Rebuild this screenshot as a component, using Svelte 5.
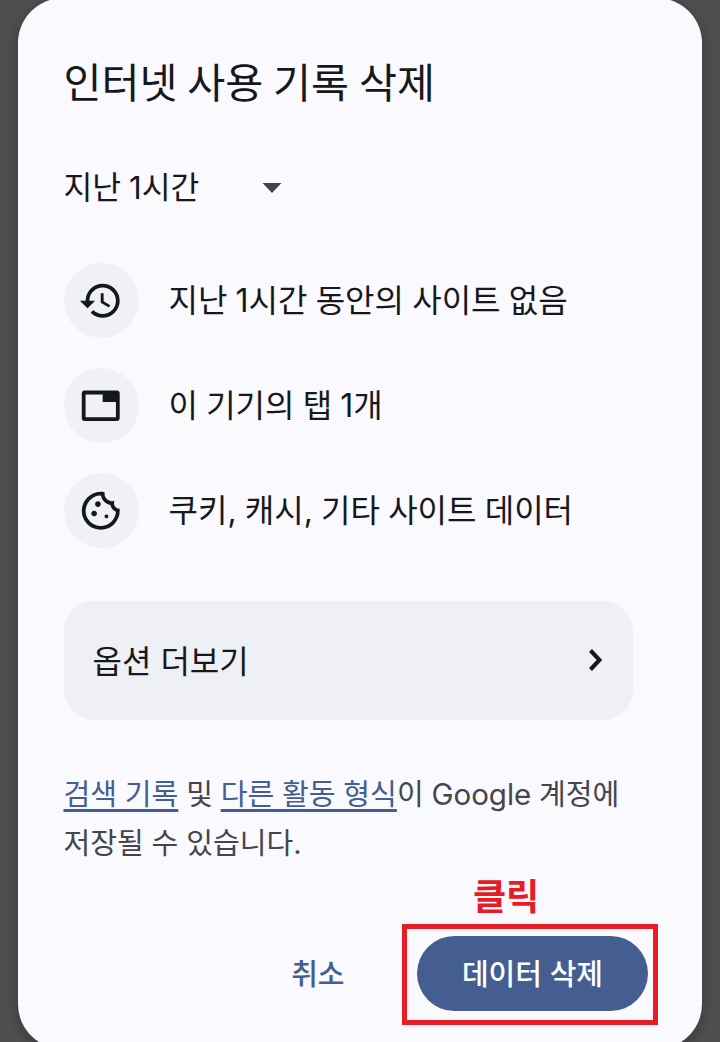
<script lang="ts">
  type IconName = "history" | "tab" | "cookie";

  const items: { icon: IconName; label: string }[] = [
    { icon: "history", label: "지난 1시간 동안의 사이트 없음" },
    { icon: "tab", label: "이 기기의 탭 1개" },
    { icon: "cookie", label: "쿠키, 캐시, 기타 사이트 데이터" },
  ];
</script>

<div class="scrim">
  <div class="dialog" role="dialog" aria-labelledby="dialog-title">
    <h1 id="dialog-title">인터넷 사용 기록 삭제</h1>

    <button class="period">
      <span>지난 1시간</span>
      <svg class="caret" viewBox="0 0 20 10" aria-hidden="true">
        <path d="M0.5 0h19L10 10z" />
      </svg>
    </button>

    <ul class="items">
      {#each items as item}
        <li>
          <span class="badge">
            {#if item.icon === "history"}
              <svg viewBox="0 0 24 24" aria-hidden="true">
                <path d="M13 3a9 9 0 0 0-9 9H1l3.890 3.890.070.140L9 12H6c0-3.870 3.130-7 7-7s7 3.130 7 7-3.130 7-7 7c-1.930 0-3.680-.790-4.940-2.060l-1.420 1.420A8.950 8.950 0 0 0 13 21a9 9 0 0 0 0-18zm-1 5v5l4.280 2.540.720-1.210-3.500-2.080V8z" />
              </svg>
            {:else if item.icon === "tab"}
              <svg viewBox="0 0 24 24" aria-hidden="true">
                <path fill-rule="evenodd" d="M3.600 4h16.800A1.600 1.600 0 0 1 22 5.600v12.800a1.600 1.600 0 0 1-1.600 1.600H3.600A1.600 1.600 0 0 1 2 18.400V5.600A1.600 1.600 0 0 1 3.600 4zM4 6v12h16v-8h-7V6z" />
              </svg>
            {:else}
              <svg viewBox="0 -960 960 960" aria-hidden="true">
                <path d="M480-80q-83 0-156-31.500T197-197q-54-54-85.500-127T80-480q0-75 29-147t81-128.500q52-56.500 125-91T475-881q21 0 43 2t45 7q-9 45 6 85t45 66.500q30 26.500 71.500 36.500t85.500-5q-26 59 7.500 113t99.500 56q1 11 1.500 20.500t.5 20.500q0 82-31.500 154.500t-85.500 127q-54 54.500-127 86T480-80Zm-60-480q25 0 42.500-17.500T480-620q0-25-17.500-42.500T420-680q-25 0-42.500 17.500T360-620q0 25 17.500 42.500T420-560Zm-80 200q25 0 42.500-17.500T400-420q0-25-17.500-42.500T340-480q-25 0-42.500 17.500T280-420q0 25 17.500 42.500T340-360Zm260 40q17 0 28.500-11.500T640-360q0-17-11.500-28.500T600-400q-17 0-28.500 11.500T560-360q0 17 11.500 28.500T600-320ZM480-160q122 0 216.500-84T800-458q-50-22-78.500-60T683-603q-77-11-132-66t-68-132q-80-2-140.500 29t-101 79.500Q201-644 180.500-587T160-480q0 133 93.500 226.500T480-160Z" />
              </svg>
            {/if}
          </span>
          <span class="label">{item.label}</span>
        </li>
      {/each}
    </ul>

    <button class="more">
      <span class="more-label">옵션 더보기</span>
      <svg class="chevron" viewBox="0 0 16 24" aria-hidden="true">
        <path d="M2.500 2.500 11.500 12l-9 9.500" />
      </svg>
    </button>

    <p class="note">
      <a href="#search">검색 기록</a> 및 <a href="#activity">다른 활동 형식</a>이 <span class="brand">Google</span> 계정에<br />저장될 수 있습니다.
    </p>

    <div class="actions">
      <button class="cancel">취소</button>
      <div class="callout">
        <button class="confirm">데이터 삭제</button>
        <span class="callout-frame"></span>
        <span class="callout-label">클릭</span>
      </div>
    </div>
  </div>
</div>

<style>
  :global(body) {
    background: #4f4f4f;
  }

  .scrim {
    box-sizing: border-box;
    height: 1042px;
    padding: 0 18px;
    overflow: hidden;
    background: #4f4f4f;
    color: #17181c;
    font-family: Inter, "Noto Sans CJK KR", sans-serif;
  }

  .dialog {
    box-sizing: border-box;
    height: 1051px;
    margin-top: -2px;
    padding: 61px 54px 0 45.5px;
    border-radius: 45px;
    background: #faf9fe;
    box-shadow: 0 4px 14px rgba(0, 0, 0, 0.3);
  }

  button {
    padding: 0;
    border: 0;
    background: none;
    color: inherit;
    font: inherit;
    white-space: nowrap;
  }

  h1 {
    margin: 0;
    font-size: 41.3px;
    font-weight: 400;
    line-height: 48px;
    word-spacing: -1.8px;
  }

  .period {
    display: flex;
    align-items: center;
    justify-content: space-between;
    width: 218.5px;
    height: 40px;
    margin-top: 61px;
    font-size: 31.3px;
    line-height: 40px;
    word-spacing: -0.8px;
  }

  .caret {
    width: 20px;
    height: 10px;
    fill: #44464c;
  }

  .items {
    display: flex;
    flex-direction: column;
    gap: 30.2px;
    margin: 55px 0 0;
    padding: 0;
    list-style: none;
  }

  .items li {
    display: flex;
    align-items: center;
    gap: 30px;
    height: 75px;
    font-size: 32px;
    line-height: 40px;
    word-spacing: -0.8px;
  }

  .label {
    padding-top: 1px;
  }

  .badge {
    display: flex;
    align-items: center;
    justify-content: center;
    width: 75px;
    height: 75px;
    border-radius: 50%;
    background: #eff1f6;
  }

  .badge svg {
    width: 45.5px;
    height: 45.5px;
    fill: #14171b;
  }

  .more {
    display: flex;
    box-sizing: border-box;
    align-items: center;
    justify-content: space-between;
    width: 569.5px;
    height: 119px;
    margin-top: 52.6px;
    padding: 0 29px;
    border-radius: 30px;
    background: #eff0f6;
    font-size: 32px;
    line-height: 40px;
  }

  .more-label {
    padding-top: 3px;
  }

  .chevron {
    width: 16px;
    height: 24px;
    fill: none;
    stroke: #17181c;
    stroke-width: 4;
  }

  .note {
    margin: 50px 0 0;
    color: #44464c;
    font-size: 29.1px;
    line-height: 49px;
    white-space: nowrap;
    word-spacing: -0.4px;
  }

  .note a {
    color: #445e91;
    text-decoration: underline;
    text-decoration-thickness: 2.5px;
    text-decoration-skip-ink: none;
    text-underline-offset: 4px;
  }

  .brand {
    font-size: 29.5px;
  }

  .actions {
    display: flex;
    align-items: center;
    justify-content: flex-end;
    gap: 72.5px;
    margin-top: 68px;
    font-size: 29px;
    font-weight: 500;
  }

  .cancel {
    padding-bottom: 2px;
    color: #445e91;
  }

  .callout {
    position: relative;
  }

  .confirm {
    display: block;
    width: 231px;
    height: 75px;
    padding-bottom: 2px;
    border-radius: 38px;
    background: #445e91;
    color: #fff;
  }

  .callout-frame {
    position: absolute;
    inset: -12px -10px -14px -15px;
    border: 5px solid #e81c24;
  }

  .callout-label {
    position: absolute;
    top: -63px;
    left: 56px;
    color: #e81c24;
    font-size: 36px;
    font-weight: 700;
    line-height: 48px;
  }
</style>
